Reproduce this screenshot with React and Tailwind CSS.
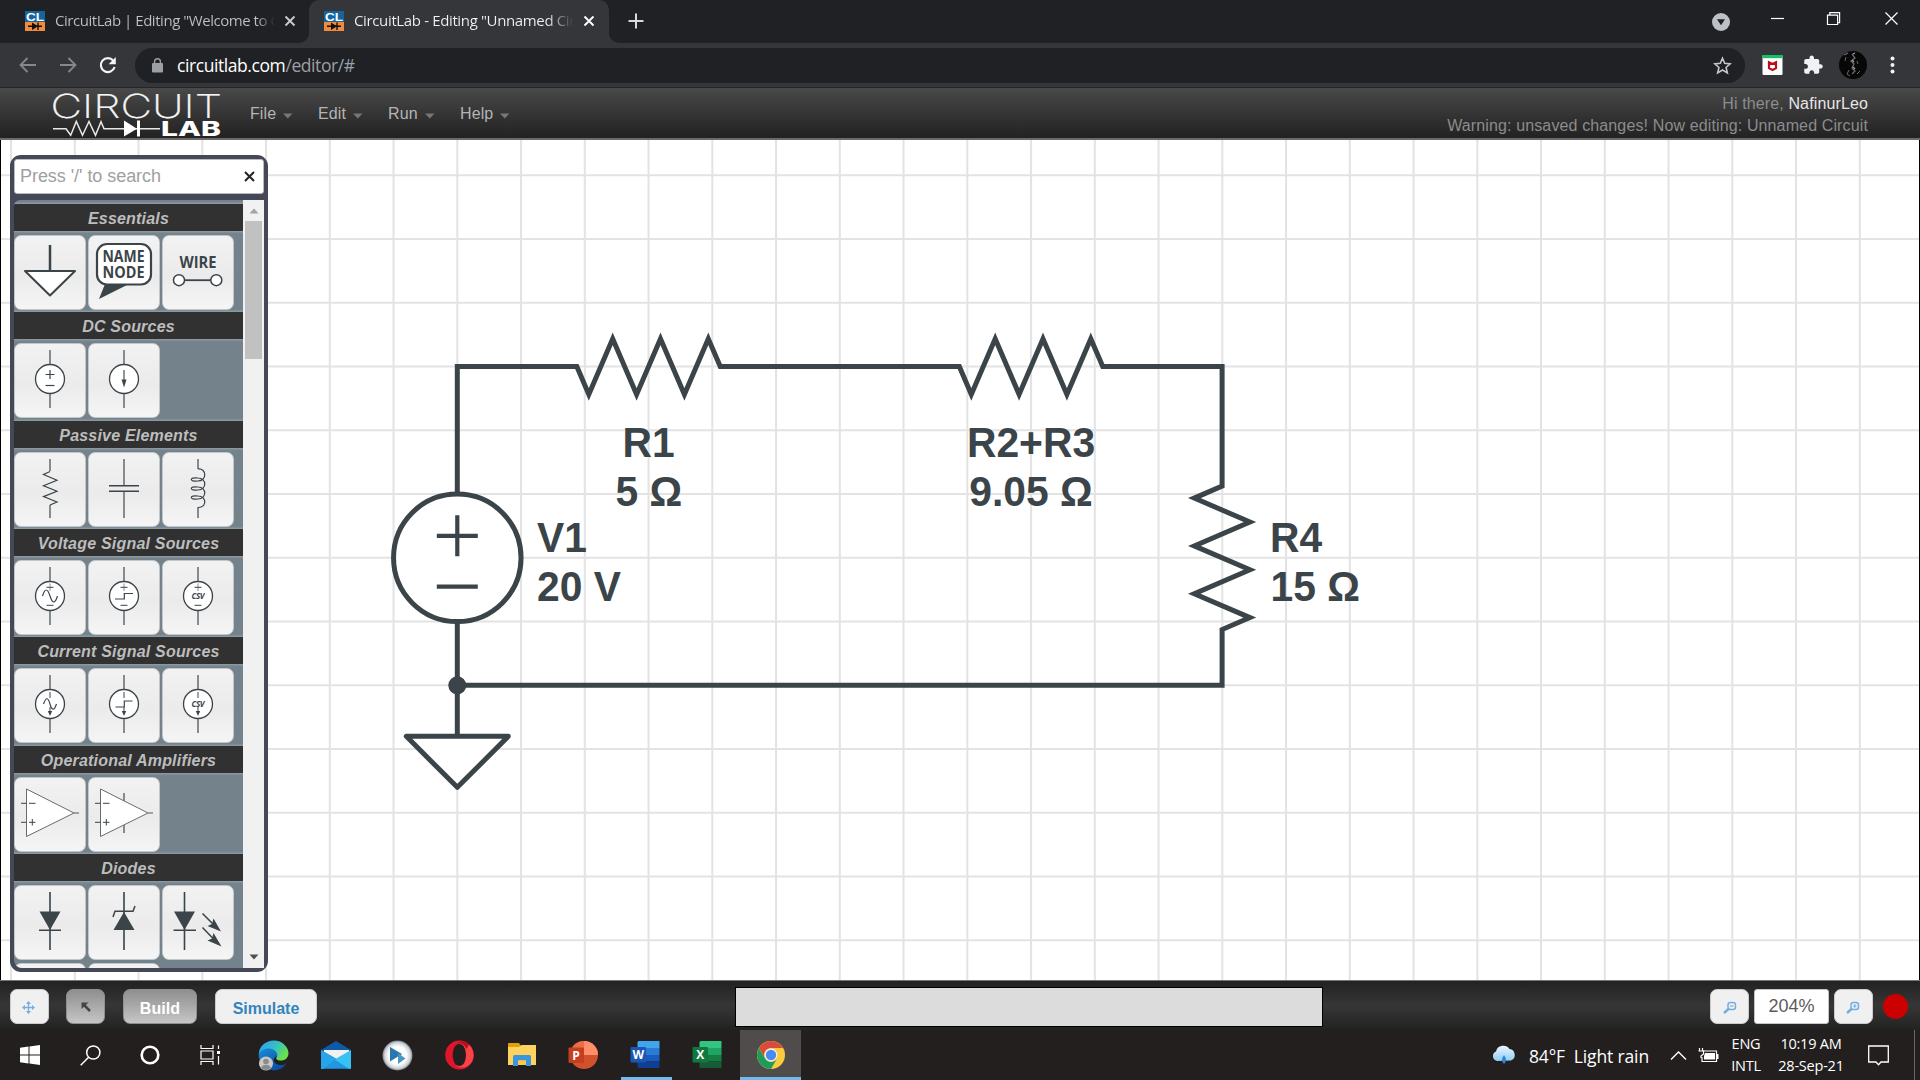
import React from "react";

const INK = "#3b4449";
const G = 63.75;
const X0 = 457.3;
const Y0 = 226.6;

function Favicon() {
  return (
    <svg width="20" height="20" viewBox="0 0 20 20" className="shrink-0">
      <rect width="20" height="11" fill="#15639f" />
      <rect y="11" width="20" height="9" fill="#f08a3c" />
      <text x="1" y="9.7" fontFamily="Liberation Sans, sans-serif" fontWeight="700" fontSize="11.5" fill="#fff" textLength="18" lengthAdjust="spacingAndGlyphs">CL</text>
      <path d="M3 15.3H17M13 11.5V19" stroke="#111" strokeWidth="1.4" />
      <path d="M7 11.5V19L13 15.3Z" fill="#111" />
    </svg>
  );
}

function Close({ c = "#dfe1e5" }) {
  return (
    <svg width="12" height="12" viewBox="0 0 12 12" className="shrink-0">
      <path d="M1.5 1.5L10.5 10.5M10.5 1.5L1.5 10.5" stroke={c} strokeWidth="1.9" />
    </svg>
  );
}

function TabBar() {
  return (
    <div className="flex h-[43px] bg-[#202124] text-[15px]">
      <div className="flex h-[42px] w-[309px] items-center pl-[25px]">
        <Favicon />
        <div className="mb-[2px] ml-[10px] w-[220px] overflow-hidden whitespace-nowrap bg-linear-to-r from-[#bdc1c6] from-92% to-[#202124] bg-clip-text tracking-[-0.46px] text-transparent">CircuitLab | Editing "Welcome to C</div>
        <div className="ml-[9px] flex"><Close c="#c8cbcf" /></div>
      </div>
      <div className="relative flex h-[43px] w-[300px] items-center rounded-t-[10px] bg-[#35363a] pb-px pl-[15px]">
        <svg className="absolute -left-[10px] bottom-0" width="10" height="10"><path d="M10 0V10H0A10 10 0 0 0 10 0" fill="#35363a" /></svg>
        <svg className="absolute -right-[10px] bottom-0" width="10" height="10"><path d="M0 0V10H10A10 10 0 0 1 0 0" fill="#35363a" /></svg>
        <Favicon />
        <div className="mb-[2px] ml-[10px] w-[220px] overflow-hidden whitespace-nowrap bg-linear-to-r from-[#f1f3f4] from-88% to-[#35363a] bg-clip-text tracking-[-0.36px] text-transparent">CircuitLab - Editing "Unnamed Circuit</div>
        <div className="ml-[9px] flex"><Close c="#ffffff" /></div>
      </div>
      <svg width="16" height="16" viewBox="0 0 16 16" className="ml-[19px] mt-[13px]"><path d="M8 0.5V15.5M0.5 8H15.5" stroke="#d8dade" strokeWidth="2" /></svg>
      <div className="flex-1" />
      <svg width="18" height="18" viewBox="0 0 18 18" className="mr-[40px] mt-[13px]"><circle cx="9" cy="9" r="9" fill="#bdc1c6" /><path d="M5 6.2H13L9 12.3Z" fill="#202124" /></svg>
      <svg width="130" height="16" viewBox="0 0 130 16" className="mr-[20px] mt-[11px]" fill="none" stroke="#fff" strokeWidth="1.2">
        <path d="M1 7.5H14" />
        <path d="M57.5 4.2H67.6V13.5H57.5ZM59.8 4V1.6H69.6V11.6H67.600" />
        <path d="M115.5 1.5L127.5 13.5M127.5 1.5L115.5 13.5" />
      </svg>
    </div>
  );
}

function AddressBar() {
  return (
    <div className="flex h-[45px] items-center border-b border-[#242527] bg-[#35363a]">
      <svg width="135" height="44" viewBox="0 0 135 44" fill="none" className="shrink-0">
        <path d="M36 22H20.5M27.5 15L20.5 22L27.5 29" stroke="#85878b" strokeWidth="1.8" />
        <path d="M60 22H75.5M68.5 15L75.5 22L68.5 29" stroke="#85878b" strokeWidth="1.8" />
        <path d="M113.3 17.6A7 7 0 1 0 114.6 24" stroke="#f1f3f4" strokeWidth="2.2" />
        <path d="M115.8 14V21.2H108.6Z" fill="#f1f3f4" />
      </svg>
      <div className="flex h-[35px] w-[1610px] items-center rounded-full bg-[#202124] pl-[17px] pr-[13px]">
        <svg width="11" height="15" viewBox="0 0 11 15"><rect y="5" width="11" height="9.5" rx="1" fill="#9aa0a6" /><path d="M2.6 6V3.6A2.9 2.9 0 0 1 8.4 3.6V6" fill="none" stroke="#9aa0a6" strokeWidth="1.4" /></svg>
        <div className="ml-[14px] text-[17.5px] leading-[30px] tracking-[-0.42px] text-white">circuitlab.com<span className="text-[#9aa0a6]">/editor/#</span></div>
        <div className="flex-1" />
        <svg width="19" height="19" viewBox="0 0 24 24"><path d="M12 2.8L14.8 9.3L21.8 9.9L16.5 14.5L18.1 21.4L12 17.7L5.9 21.4L7.5 14.5L2.2 9.9L9.2 9.3Z" fill="none" stroke="#c4c7cb" strokeWidth="2" /></svg>
      </div>
      <svg width="175" height="44" viewBox="0 0 175 44">
        <rect x="17.5" y="12" width="20" height="20" rx="1" fill="#fff" />
        <rect x="17.5" y="12" width="20" height="3.2" fill="#0fc26b" />
        <path d="M24 19.2V25.2L27.5 27L31 25.2V19.2L27.5 21Z" fill="none" stroke="#b8101c" strokeWidth="2.2" />
        <g transform="translate(57.500 11.500) scale(0.88)"><path fill="#eff1f3" d="M20.500 11H19V7c0-1.100-.9-2-2-2h-4V3.500C13 2.120 11.880 1 10.500 1S8 2.120 8 3.500V5H4c-1.100 0-2 .9-2 2v3.800h1.500c1.490 0 2.700 1.210 2.700 2.700s-1.210 2.700-2.700 2.700H2V20c0 1.100.9 2 2 2h3.800v-1.500c0-1.490 1.210-2.700 2.700-2.700s2.700 1.210 2.700 2.700V22H17c1.100 0 2-.9 2-2v-4h1.500c1.380 0 2.500-1.120 2.500-2.500S21.880 11 20.500 11z" /></g>
        <circle cx="108" cy="22" r="14" fill="#070707" />
        <g fill="none" stroke="#8c8c8c" strokeWidth="1.3" opacity="0.75">
          <path d="M99 12L103 10M107 11L110 15L106 18L109 21L107 25L110 28L107 31" />
          <path d="M101 14L100 18M112 18L113 21M104 27L102 31L105 33M115 28L112 31" strokeWidth="1" />
          <path d="M107 17L109 19M108 24L110 26M108 11L110 10" stroke="#d8d8d8" />
        </g>
        <g fill="#f1f3f4"><circle cx="147.500" cy="15.500" r="2" /><circle cx="147.500" cy="22" r="2" /><circle cx="147.500" cy="28.500" r="2" /></g>
      </svg>
    </div>
  );
}

function SiteHeader() {
  return (
    <div className="flex h-[52px] border-b-2 border-[#6b6b6b] bg-linear-to-b from-[#494949] to-[#222222] font-['Liberation_Sans',Arial,sans-serif]">
      <svg width="240" height="50" viewBox="0 0 240 50" className="shrink-0 overflow-visible">
        <text x="50.500" y="29.500" fontFamily="Inter, Lato, sans-serif" fontWeight="200" fontSize="33" fill="#f4f4f4" stroke="#f4f4f4" strokeWidth="0.200" textLength="171.500" lengthAdjust="spacingAndGlyphs">CIRCUIT</text>
        <path d="M53 40.700H66L70.700 47.300L76.300 33.500L82.500 47.300L89 33.500L95.500 47.300L101 33.800L104 40.700H160" fill="none" stroke="#e8e8e8" strokeWidth="1.500" />
        <path d="M124 32.500V48.500L137 40.700Z" fill="#fff" />
        <path d="M138.500 32.500V48.500" stroke="#fff" strokeWidth="3" />
        <text x="161" y="48" fontFamily="Inter, sans-serif" fontWeight="800" fontSize="20" fill="#fff" textLength="60" lengthAdjust="spacingAndGlyphs">LAB</text>
      </svg>
      <div className="flex items-center pl-[10px] pt-[2px] text-[16px] tracking-[0.1px] text-[#b4b4b4]">
        <MenuItem label="File" cls="w-[68px]" />
        <MenuItem label="Edit" cls="w-[70px]" />
        <MenuItem label="Run" cls="w-[72px]" />
        <MenuItem label="Help" cls="w-[72px]" />
      </div>
      <div className="flex-1" />
      <div className="pr-[52px] pt-[5px] text-right text-[16px] leading-[22px] tracking-[0.13px] text-[#8c8c8c]">
        <div>Hi there, <span className="text-[#e6e6e6]">NafinurLeo</span></div>
        <div>Warning: unsaved changes! Now editing: Unnamed Circuit</div>
      </div>
    </div>
  );
}

function MenuItem({ label, cls }) {
  return (
    <div className={"flex items-center " + cls}>
      <span>{label}</span>
      <svg width="10" height="6" viewBox="0 0 10 6" className="ml-[7px] mt-[4px]"><path d="M0 0.500H9.500L4.750 5.500Z" fill="#777" /></svg>
    </div>
  );
}

const thin = { fill: "none", stroke: INK, strokeWidth: 1.2 };
const lead = { fill: "none", stroke: "#858b8e", strokeWidth: 2 };

function Source({ children }) {
  return (
    <>
      <path d="M36 7V22M36 50V65" {...lead} />
      <circle cx="36" cy="36" r="14.500" fill="#fff" stroke={INK} strokeWidth="1.300" />
      {children}
    </>
  );
}
const VMarks = () => (
  <>
    <path d="M36 23.500V31" stroke="#b5b9bb" strokeWidth="1.600" />
    <path d="M32.500 27.300H39.500M32.500 45.300H39.500" {...thin} strokeWidth="1" />
  </>
);
const IMarks = () => (
  <>
    <path d="M36 24V30M36 39V43" stroke="#858b8e" strokeWidth="1.600" />
    <path d="M33.800 43H38.200L36 48Z" fill={INK} />
  </>
);
const Csv = () => <text x="36" y="39.300" textAnchor="middle" fontFamily="Open Sans, sans-serif" fontWeight="700" fontStyle="italic" fontSize="8" fill={INK} textLength="13">CSV</text>;

const ICONS = {
  ground: <><path d="M36 10V36" stroke={INK} strokeWidth="2.500" /><path d="M11 36H61L36 60.500Z" fill="#fff" stroke={INK} strokeWidth="2" strokeLinejoin="round" /></>,
  name: (
    <>
      <path d="M17 49L11 64L41 49Z" fill={INK} />
      <rect x="9" y="9" width="54" height="40.500" rx="10" fill="#fff" stroke={INK} strokeWidth="2.200" />
      <g fontFamily="Open Sans, sans-serif" fontWeight="700" fontSize="16" fill={INK}>
        <text x="14.500" y="27" textLength="42" lengthAdjust="spacingAndGlyphs">NAME</text>
        <text x="14.500" y="43" textLength="42" lengthAdjust="spacingAndGlyphs">NODE</text>
      </g>
    </>
  ),
  wire: (
    <>
      <text x="17.500" y="33" fontFamily="Open Sans, sans-serif" fontWeight="700" fontSize="15.500" fill={INK} textLength="37" lengthAdjust="spacingAndGlyphs">WIRE</text>
      <path d="M22 45.200H49" stroke={INK} strokeWidth="1.800" />
      <circle cx="17" cy="45.200" r="5.500" fill="#fff" stroke={INK} strokeWidth="1.500" />
      <circle cx="54.300" cy="45.200" r="5.500" fill="#fff" stroke={INK} strokeWidth="1.500" />
    </>
  ),
  vdc: <Source><path d="M31.500 31.500H40.500M36 27V36" {...thin} /><path d="M31.500 42.500H40.500" {...thin} /></Source>,
  idc: <Source><path d="M36 27V38" stroke="#858b8e" strokeWidth="1.800" /><path d="M33.500 36.500H38.500L36 44.500Z" fill={INK} /></Source>,
  res: <><path d="M36 7V19M36 53V66" {...lead} /><path d="M36 19.500L29.500 22.500L43 28.300L29.500 33.700L43 39.200L29.500 44.600L43 50L36 53" {...thin} /></>,
  cap: <><path d="M36 7V33M36 40V66" {...lead} /><path d="M21 33.700H51M21 39.300H51" stroke={INK} strokeWidth="1.500" /></>,
  ind: (
    <>
      <path d="M36 7V17M36 55V66" {...lead} />
      <path d="M36 17C45 16 45 29 36 29C27 30 27 25 36 26C45 26 45 38 36 38C27 39 27 34 36 35C45 35 45 47 36 47C27 48 27 43 36 44C45 44 45 56 36 55.500" {...thin} />
    </>
  ),
  vsin: <Source><VMarks /><path d="M28.500 36C31 28 33.500 28 36 36S41 44 43.500 36" {...thin} /></Source>,
  vstep: <Source><VMarks /><path d="M27 39H36.300V33.500H45" {...thin} /></Source>,
  vcsv: <Source><VMarks /><Csv /></Source>,
  isin: <Source><IMarks /><path d="M29.500 36C32 29 34 29 36 36S40 43 42.500 36" {...thin} /></Source>,
  istep: <Source><IMarks /><path d="M27.500 39H36.300V33H44.500" {...thin} /></Source>,
  icsv: <Source><IMarks /><Csv /></Source>,
  op: (
    <>
      <path d="M12.500 12V59.500L60 36Z" fill="#fff" stroke="#666c70" strokeWidth="1" />
      <path d="M7 26.300H12.500M15 26.300H21.500M7 45.300H12.500M15 45.300H21.500M18.300 42V48.500" {...thin} strokeWidth="1" />
      <path d="M59 36H65" {...lead} strokeWidth="1.500" />
    </>
  ),
  op5: (
    <>
      <path d="M36 16V56" {...lead} />
      <path d="M12.500 12V59.500L60 36Z" fill="#fff" stroke="#666c70" strokeWidth="1" />
      <path d="M7 26.300H12.500M15 26.300H21.500M7 45.300H12.500M15 45.300H21.500M18.300 42V48.500" {...thin} strokeWidth="1" />
      <path d="M59 36H65" {...lead} strokeWidth="1.500" />
    </>
  ),
  diode: <><path d="M36 7V65" stroke="#5d656a" strokeWidth="2" /><path d="M25.500 26.500H46.500L36 45Z" fill={INK} /><path d="M25 45.200H47" stroke={INK} strokeWidth="1.500" /></>,
  zener: <><path d="M36 7V65" stroke="#5d656a" strokeWidth="2" /><path d="M25.500 45H46.500L36 27Z" fill={INK} /><path d="M25 32L27 26.300H45L47 21" fill="none" stroke={INK} strokeWidth="1.500" /></>,
  led: (
    <>
      <path d="M22.500 7V65" stroke={INK} strokeWidth="1.600" />
      <path d="M12 26.500H33L22.500 45Z" fill={INK} />
      <path d="M11.500 45.200H34M40.500 28.500L53 41M40.500 42.500L53 55.500" stroke={INK} strokeWidth="1.500" />
      <path d="M59 46.500L45.500 41L50 39L51.500 33.500ZM59.500 61.500L45.500 55.500L50 53.500L51.500 48Z" fill={INK} />
    </>
  ),
  none: null,
};

const SECTIONS = [
  ["Essentials", ["ground", "name", "wire"]],
  ["DC Sources", ["vdc", "idc"]],
  ["Passive Elements", ["res", "cap", "ind"]],
  ["Voltage Signal Sources", ["vsin", "vstep", "vcsv"]],
  ["Current Signal Sources", ["isin", "istep", "icsv"]],
  ["Operational Amplifiers", ["op", "op5"]],
  ["Diodes", ["diode", "zener", "led"]],
];

function Tile({ icon }) {
  return (
    <div className="h-[75px] w-[72px] rounded-[7px] border border-[#c3c7ca] bg-linear-to-b from-[#f2f2f2] via-[#ebebeb] via-55% to-[#f5f5f5]">
      <svg width="72" height="75" viewBox="0 0 72 75" className="-ml-px -mt-px">{ICONS[icon]}</svg>
    </div>
  );
}

function Palette() {
  return (
    <div className="absolute left-[10px] top-[15px] h-[817px] w-[258px] rounded-[11px] border-4 border-[#444857] bg-[#444857] font-['Liberation_Sans',Arial,sans-serif]">
      <div className="flex h-[35px] items-center rounded-[3px] border border-[#b9bbc0] bg-white pl-[5px] pr-[8px] text-[18px] text-[#a0a0a0]">
        <span className="tracking-[-0.05px]">Press '/' to search</span>
        <div className="flex-1" />
        <svg width="11" height="11" viewBox="0 0 11 11"><path d="M1 1L10 10M10 1L1 10" stroke="#222" strokeWidth="2" /></svg>
      </div>
      <div className="mt-[6px] flex h-[768px] overflow-hidden rounded-bl-[8px] rounded-tl-[6px]">
        <div className="w-[229px] bg-[#74828c] pt-[4px]">
          {SECTIONS.map(([title, icons]) => (
            <div key={title} className="h-[108.330px]">
              <div className="h-[27px] bg-[#313131] pt-px text-center text-[16px] font-bold italic leading-[28px] tracking-[0.2px] text-[#bdbdbd] shadow-[0_0_2px_1px_#97a3aa]">{title}</div>
              <div className="mt-[4px] flex gap-[2px]">
                {icons.map((i) => <Tile key={i} icon={i} />)}
              </div>
            </div>
          ))}
          <div className="mt-[1px] flex gap-[2px]"><Tile icon="none" /><Tile icon="none" /></div>
        </div>
        <div className="flex w-[21px] flex-col items-center bg-[#f1f1f1]">
          <svg width="10" height="6" viewBox="0 0 10 6" className="mt-[8px]"><path d="M0.500 5.500H9.500L5 0.500Z" fill="#a3a3a3" /></svg>
          <div className="mt-[7px] h-[138px] w-[17px] bg-[#c1c1c1]" />
          <div className="flex-1" />
          <svg width="10" height="6" viewBox="0 0 10 6" className="mb-[8px]"><path d="M0.500 0.500H9.500L5 5.500Z" fill="#505050" /></svg>
        </div>
      </div>
    </div>
  );
}

function zigzag(cx) {
  const s = 23.9;
  let d = `L${cx - 3 * s} ${Y0}`;
  for (let i = 0; i < 6; i++) d += `L${cx - 2.5 * s + i * s} ${Y0 + (i % 2 ? -27.8 : 27.8)}`;
  return d + `L${cx + 3 * s} ${Y0}`;
}

/* Labels are drawn slightly condensed: 42.6 units tall, 40.8 wide. */
function Label({ x, y, anchor, children }) {
  return <text transform={`translate(${x} ${y}) scale(0.958 1)`} textAnchor={anchor}>{children}</text>;
}

function Circuit() {
  const xr = X0 + 12 * G - 0.2;
  const cy = Y0 + 3 * G;
  const s = 23.9;
  let v = `L${xr} ${cy - 3 * s}`;
  for (let i = 0; i < 6; i++) v += `L${xr + (i % 2 ? 27.8 : -27.8)} ${cy - 2.5 * s + i * s}`;
  v += `L${xr} ${cy + 3 * s}`;
  const yb = Y0 + 5 * G;
  return (
    <svg width="1920" height="840" viewBox="0 0 1920 840" className="block">
      <g stroke="#e3e3e3" strokeWidth="2.040">
        {Array.from({ length: 30 }, (_, i) => <path key={"v" + i} d={`M${X0 + (i - 7) * G} 0V840`} />)}
        {Array.from({ length: 13 }, (_, i) => <path key={"h" + i} d={`M0 ${Y0 + (i - 3) * G}H1920`} />)}
      </g>
      <g fill="none" stroke={INK} strokeWidth="5" strokeMiterlimit="10">
        <path d={`M${X0} ${Y0 + 2 * G}V${Y0}${zigzag(X0 + 3 * G)}${zigzag(X0 + 9 * G)}H${xr}${v}V${yb}H${X0}`} />
        <path d={`M${X0} ${Y0 + 4 * G}V${yb + 51}`} />
        <circle cx={X0} cy={cy} r={G} fill="#fff" />
        <path d={`M${X0 - 20.500} ${cy - 22}h41M${X0} ${cy - 42.500}v41M${X0 - 20.500} ${cy + 28.700}h41`} strokeWidth="4.200" />
        <path d={`M${X0 - 51} ${yb + 51}h102l-51 51z`} fill="#fff" strokeLinejoin="round" />
      </g>
      <circle cx={X0} cy={yb} r="9" fill={INK} />
      <g fontFamily="Liberation Sans, Arial, sans-serif" fontWeight="700" fontSize="42.600" fill={INK}>
        <Label x="648.500" y="316.500" anchor="middle">R1</Label>
        <Label x="648.800" y="365.500" anchor="middle">5 Ω</Label>
        <Label x="1031" y="316.500" anchor="middle">R2+R3</Label>
        <Label x="1031" y="365.500" anchor="middle">9.05 Ω</Label>
        <Label x="537" y="411.800">V1</Label>
        <Label x="537" y="460.800">20 V</Label>
        <Label x="1270" y="411.800">R4</Label>
        <Label x="1270.500" y="460.800">15 Ω</Label>
      </g>
      <path d="M0.500 0V840M1919.500 0V840" stroke="#000" />
    </svg>
  );
}

function Btn({ cls, children }) {
  return <div className={"flex h-[35px] shrink-0 items-center justify-center rounded-[7px] border text-[16px] font-bold " + cls}>{children}</div>;
}
const LIGHT = "border-[#cfcaca] bg-[#f0f0f0] text-[#3284bb]";
const DARK = "border-[#8f8f8f] bg-linear-to-b from-[#8f8f8f] to-[#c6c6c6] text-white";

function Magnifier({ plus }) {
  return (
    <svg width="14" height="14" viewBox="0 0 14 14" fill="none" stroke="#74aee0">
      <rect x="5" y="1.500" width="7.500" height="7" rx="2.500" strokeWidth="1.500" />
      <path d="M5.500 8L1 12" strokeWidth="2.400" />
      <path d={plus ? "M7 5H10.500M8.750 3.200V6.800" : "M7 5H10.500"} strokeWidth="1.200" />
    </svg>
  );
}

function BottomBar() {
  return (
    <div className="flex h-[50px] items-center border-t border-[#777777] bg-linear-to-b from-[#222222] via-[#363636] to-[#222222] pl-[10px] pr-[12px] pt-[2px] font-['Liberation_Sans',Arial,sans-serif]">
      <Btn cls={"w-[39px] " + LIGHT}>
        <svg width="13" height="13" viewBox="0 0 13 13" className="-ml-[3px] mt-[2px]"><path d="M6.500 2V11M2 6.500H11" stroke="#74aee0" strokeWidth="1.300" /><path d="M6.500 0L9 3H4ZM6.500 13L9 10H4ZM0 6.500L3 4V9ZM13 6.500L10 4V9Z" fill="#74aee0" /></svg>
      </Btn>
      <Btn cls={"ml-[17px] w-[39px] " + DARK}>
        <svg width="11" height="11" viewBox="0 0 11 11" className="ml-[2px] mt-[2px]"><path d="M3 3L9 9" stroke="#444" strokeWidth="2.500" /><path d="M0.500 0.500H7.500L0.500 7Z" fill="#444" /></svg>
      </Btn>
      <Btn cls={"ml-[18px] w-[74px] pt-[5px] tracking-[0.1px] " + DARK}>Build</Btn>
      <Btn cls={"ml-[18px] w-[102px] pt-[5px] " + LIGHT}>Simulate</Btn>
      <div className="ml-[418px] h-[40px] w-[588px] border border-black bg-[#dcdcdc]" />
      <div className="flex-1" />
      <Btn cls={"w-[39px] pt-[2px] " + LIGHT}><Magnifier /></Btn>
      <div className="ml-[5px] flex h-[35px] w-[75px] items-center justify-center rounded-[3px] border border-[#c9c4c4] bg-white text-[18px] text-[#5c5c5c]">204%</div>
      <Btn cls={"ml-[5px] w-[39px] pr-[2px] pt-[2px] " + LIGHT}><Magnifier plus /></Btn>
      <div className="ml-[10px] size-[25px] rounded-full bg-[#cc0000]" />
    </div>
  );
}

function Slot({ w, on, line, children }) {
  return (
    <div className={"relative flex h-[50px] shrink-0 items-center justify-center " + w + (on ? " bg-[#504c4b]" : "")}>
      {children}
      {line && <div className={"absolute bottom-0 h-[3px] bg-[#76b9ed] " + line} />}
    </div>
  );
}

function OfficeIcon({ letter, c, badge }) {
  return (
    <svg width="30" height="30" viewBox="0 0 30 30">
      <path d="M9 1H29.500V8H7.500V2.500Q7.500 1 9 1Z" fill={c[0]} />
      <path d="M7.500 8H29.500V15H7.500Z" fill={c[1]} />
      <path d="M7.500 15H29.500V21.500H7.500Z" fill={c[2]} />
      <path d="M7.500 21.500H29.500V28H9Q7.500 28 7.500 26.500Z" fill={c[3]} />
      <rect x="0.500" y="7" width="15.500" height="15.500" rx="1" fill={badge} />
      <text x="8.200" y="19" textAnchor="middle" fontFamily="Open Sans, sans-serif" fontWeight="700" fontSize="12" fill="#fff">{letter}</text>
    </svg>
  );
}

function Taskbar() {
  return (
    <div className="flex h-[50px] bg-[#231f1e] text-white">
      <Slot w="w-[60px]"><svg width="20" height="20" viewBox="0 0 20 20" fill="#fff"><path d="M0 2.800L8.500 1.600V9.500H0ZM9.500 1.500L20 0V9.500H9.500ZM0 10.500H8.500V18.400L0 17.200ZM9.500 10.500H20V20L9.500 18.500Z" /></svg></Slot>
      <Slot w="w-[60px]"><svg width="21" height="21" viewBox="0 0 21 21" fill="none" stroke="#fff" strokeWidth="1.500"><circle cx="13.300" cy="7.500" r="6.600" /><path d="M8.600 12.200L0.700 20.300" /></svg></Slot>
      <Slot w="w-[60px]"><svg width="20" height="20" viewBox="0 0 20 20"><circle cx="10" cy="10" r="8.300" fill="none" stroke="#fff" strokeWidth="2.600" /></svg></Slot>
      <Slot w="w-[60px]"><svg width="21" height="20" viewBox="0 0 21 20" fill="none" stroke="#fff" strokeWidth="1.200"><path d="M1 0V3.500H13V0M1 20V16.500H13V20M1 6H13V14H1ZM18.500 0.500V4M18.500 11V19.500" /><path d="M17 6H20V9H17Z" fill="#fff" stroke="none" /></svg></Slot>
      <Slot w="w-[67px]">
        <svg width="31" height="31" viewBox="0 0 31 31">
          <defs>
            <linearGradient id="edgeTop" x1="0" y1="0" x2="1" y2="0.500"><stop offset="0.200" stopColor="#2fa8e6" /><stop offset="0.600" stopColor="#35c4c0" /><stop offset="1" stopColor="#6be04a" /></linearGradient>
            <linearGradient id="edgeLow" x1="0" y1="0" x2="0.600" y2="1"><stop offset="0" stopColor="#1b8fdc" /><stop offset="1" stopColor="#0b4fa4" /></linearGradient>
          </defs>
          <path d="M1 13C4 4 21 4 19 16C14 18 14 24 22 25C25 25.500 27 24.500 28.500 23C24 31 15 32 9 28C2 24 0 18 1 13Z" fill="url(#edgeLow)" />
          <path d="M0.700 14.500C1 6 8 0.500 16 0.500C24 0.500 30.500 7 30.500 13C30.500 18 27 20.500 23 20.500C19 20.500 17.500 19 18.500 17.500C21 14 17 8.500 11 8.500C5.500 8.500 2 11 0.700 14.500Z" fill="url(#edgeTop)" />
          <circle cx="8" cy="23.500" r="7" fill="#c9c9c9" /><circle cx="8" cy="21.500" r="2.800" fill="#8b8b8b" /><path d="M3 28C4 23.500 12 23.500 13 28Q8 32 3 28" fill="#8b8b8b" />
        </svg>
      </Slot>
      <Slot w="w-[57px]"><svg width="30" height="28" viewBox="0 0 30 28"><path d="M0 9L15 0L30 9V12H0Z" fill="#0c5aa8" /><path d="M3 9H28V18L15 20L3 14Z" fill="#f3f1f0" /><path d="M0 9L15 17.500L30 27.800H0Z" fill="#1f97e3" /><path d="M30 9V27.800H28L13.500 18.500Z" fill="#37c2f4" /><path d="M0 9L15 18L2 28H0Z" fill="#27a4ea" /></svg></Slot>
      <Slot w="w-[67px]">
        <svg width="31" height="31" viewBox="0 0 31 31"><defs><radialGradient id="disc"><stop offset="0.600" stopColor="#fdfdfd" /><stop offset="0.860" stopColor="#cfd3d6" /><stop offset="1" stopColor="#77808a" /></radialGradient></defs><circle cx="15.500" cy="15.500" r="15" fill="url(#disc)" /><path d="M8 7V21.500L20 14Z" fill="#2a76ae" /><path d="M16 13L23.500 18.500L16 24Z" fill="#4b97c4" /></svg>
      </Slot>
      <Slot w="w-[57px]">
        <svg width="29" height="30" viewBox="0 0 29 30"><path d="M14.500 0.500A14.300 14.500 0 1 0 14.500 29.500A14.300 14.500 0 1 0 14.500 0.500ZM14.500 3.500C18.500 3.500 21 9 21 15S18.500 26.500 14.500 26.500S7.700 21 7.700 15S10.500 3.500 14.500 3.500Z" fill="#e0152a" fillRule="evenodd" /><path d="M9.500 5.500C16 -1 28.500 3 28.500 15S16 31 9.500 24.500C18 29 21 22 21 15S18 1 9.500 5.500Z" fill="#fb4248" /><path d="M10 5C15 0 21 1 24 4.500L21.500 9C19 3 14 2.500 10 5Z" fill="#b60f1b" /></svg>
      </Slot>
      <Slot w="w-[68px]">
        <svg width="28" height="26" viewBox="0 0 28 26"><path d="M0 1.500Q0 1 1 1H11L13 4H28V12H0Z" fill="#e2a008" /><path d="M0 5H11L13.500 3H28V23H0Z" fill="#fdd25f" /><path d="M5 24V14.500Q5 13 6.500 13H21.500Q23 13 23 14.500V24H18V18.500H10V24Z" fill="#3c96dc" /><path d="M10 18.500H18V23H10Z" fill="#fbc94e" /></svg>
      </Slot>
      <Slot w="w-[54px]">
        <svg width="30" height="30" viewBox="0 0 30 30"><circle cx="16" cy="15" r="14" fill="#d2512d" /><path d="M16 1A14 14 0 0 0 2 15H16Z" fill="#ee6c47" /><path d="M16 1A14 14 0 0 1 30 15H16Z" fill="#ff8f6b" /><rect x="0.500" y="7.500" width="15.500" height="15.500" rx="1" fill="#c33f1f" /><text x="8" y="19.500" textAnchor="middle" fontFamily="Open Sans, sans-serif" fontWeight="700" fontSize="12" fill="#fff">P</text></svg>
      </Slot>
      <Slot w="w-[70px]" line="left-[11px] w-[51px]"><OfficeIcon letter="W" c={["#41a5ee", "#2b7cd3", "#185abd", "#103f91"]} badge="#1a57b5" /></Slot>
      <Slot w="w-[54px]"><OfficeIcon letter="X" c={["#33c481", "#21a366", "#127e43", "#185c37"]} badge="#10783f" /></Slot>
      <div className="w-[6px]" />
      <Slot w="w-[61px]" on line="left-0 w-full">
        <svg width="28" height="28" viewBox="0 0 28 28">
          <circle cx="14" cy="14" r="14" fill="#fdcb3f" />
          <path d="M1.900 7A14 14 0 0 1 26.100 7H14A7 7 0 0 0 8 17.500Z" fill="#dc4a3d" />
          <path d="M1.900 7A14 14 0 0 0 14 28L20 17.500A7 7 0 0 1 8 17.500Z" fill="#1d9d5b" />
          <circle cx="14" cy="14" r="6.400" fill="#f2f2f2" /><circle cx="14" cy="14" r="5.200" fill="#4a8af4" />
        </svg>
      </Slot>
      <div className="flex-1" />
      <div className="flex h-[50px] items-center">
        <svg width="26" height="20" viewBox="0 0 26 20"><defs><linearGradient id="cloud" x1="0" y1="0" x2="0" y2="1"><stop offset="0" stopColor="#e9f6fe" /><stop offset="1" stopColor="#8fcdf5" /></linearGradient></defs><path d="M6 16A5 5 0 0 1 5 6.500A7.500 7.500 0 0 1 18.500 4A6 6 0 0 1 20 15.500Z" fill="url(#cloud)" /><path d="M13 10Q17 15.500 13 19Q9 15.500 13 10" fill="#2b87d8" /></svg>
        <div className="ml-[12px] mt-[3px] w-[142px] whitespace-pre text-[17.500px] tracking-[-0.140px]">84°F  Light rain</div>
        <svg width="17" height="9" viewBox="0 0 17 9" className="-ml-px"><path d="M1 8.500L8.500 1L16 8.500" fill="none" stroke="#fff" strokeWidth="1.400" /></svg>
        <svg width="21" height="15" viewBox="0 0 21 15" className="ml-[11px]"><path d="M5 3H18.500V13.500H4V9" fill="none" stroke="#fff" strokeWidth="1.200" /><path d="M7 5H17V11.500H6V8Z" fill="#fff" /><path d="M19 6H20.500V11H19Z" fill="#fff" /><path d="M1.500 0V3M4.500 0V3M0.500 3H5.500V6L3 8V10" fill="none" stroke="#fff" strokeWidth="1.200" /></svg>
        <div className="ml-[11px] w-[32px] text-center text-[14.500px] leading-[22px] tracking-[-0.200px]"><div>ENG</div><div>INTL</div></div>
        <div className="ml-[12px] w-[74px] whitespace-nowrap text-center text-[14.500px] leading-[22px] tracking-[-0.220px]"><div>10:19 AM</div><div>28-Sep-21</div></div>
        <svg width="21" height="21" viewBox="0 0 21 21" className="ml-[20px] mr-[25px]"><path d="M0.700 1H20.300V17H13L10.500 19.700L8 17H0.700Z" fill="none" stroke="#fff" strokeWidth="1.300" /></svg>
        <div className="mr-[5px] h-[50px] w-px bg-[#6a6767]" />
      </div>
    </div>
  );
}

export default function App() {
  return (
    <div className="flex h-[1080px] w-[1920px] flex-col overflow-hidden bg-white font-['Open_Sans','Noto_Sans',sans-serif]">
      <TabBar />
      <AddressBar />
      <SiteHeader />
      <div className="relative h-[840px]">
        <Circuit />
        <Palette />
      </div>
      <BottomBar />
      <Taskbar />
    </div>
  );
}
